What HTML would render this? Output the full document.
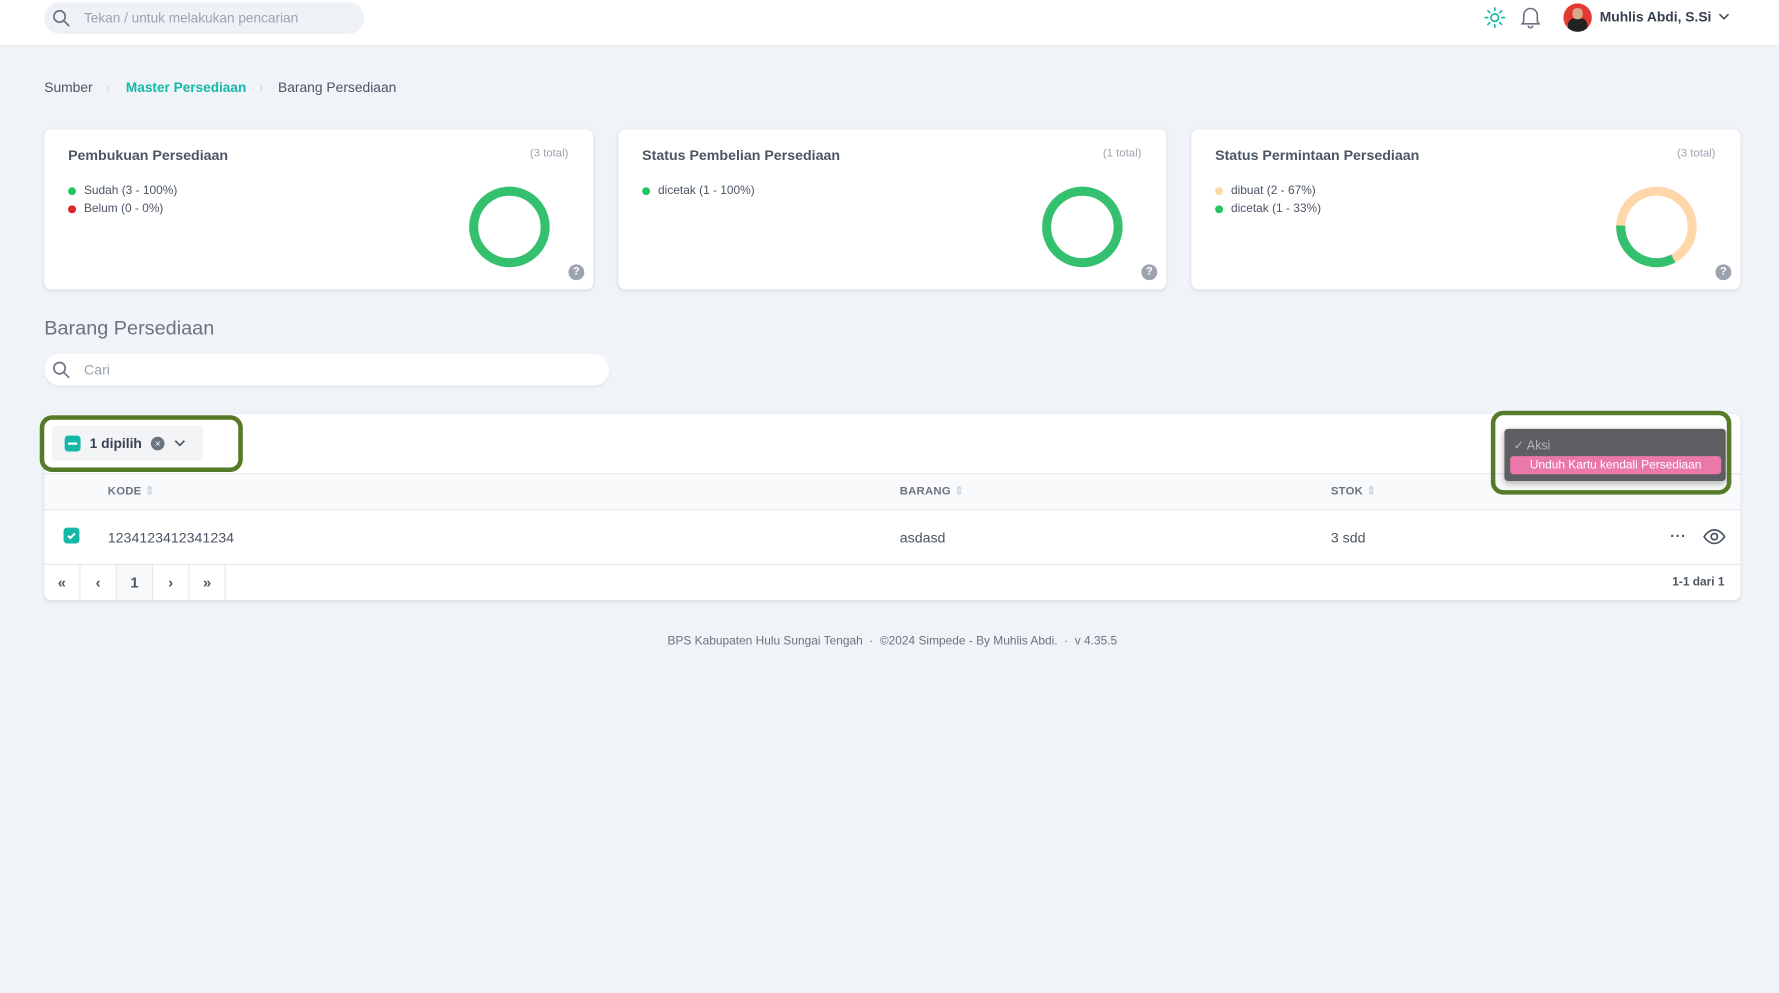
<!DOCTYPE html>
<html><head><meta charset="utf-8"><style>
*{box-sizing:border-box;margin:0;padding:0}
html,body{width:1779px;height:993px;overflow:hidden;background:#f0f3f8}
#w{width:1568px;height:875px;transform:scale(1.13457);transform-origin:0 0;position:relative;font-family:"Liberation Sans",sans-serif;color:#4b5563}
.abs{position:absolute}
.top{left:0;top:0;width:1568px;height:41px;background:#fff;border-bottom:1px solid #e5e7eb}
.card{background:#fff;border-radius:6px;box-shadow:0 1px 3px rgba(0,0,0,.12)}
.ct{font-size:12.5px;font-weight:bold;color:#4b5563}
.tot{font-size:10px;color:#9ca3af}
.lg{font-size:10.5px;color:#4b5563;display:flex;align-items:center}
.dot{width:7px;height:7px;border-radius:50%;display:inline-block;margin-right:7px}
.help{width:14px;height:14px;border-radius:50%;background:#9ca3af;color:#fff;font-size:10px;font-weight:bold;text-align:center;line-height:14px}
.th{font-size:10px;font-weight:bold;color:#6b7280;letter-spacing:.2px}
.pg{width:32px;height:31px;border-right:1px solid #e5e7eb;text-align:center;line-height:31px;font-size:13px;color:#4b5563;font-weight:bold}
</style></head><body><div id="w">
<div class="abs top"></div>
<div class="abs" style="left:39px;top:2px;width:282px;height:28px;border-radius:14px;background:#eef2f7"></div>
<svg class="abs" style="left:46px;top:8px" width="16" height="16" viewBox="0 0 16 16" fill="none" stroke="#6b7280" stroke-width="1.5"><circle cx="6.5" cy="6.5" r="5"/><path d="M10.5 10.5L15 15"/></svg>
<div class="abs" style="left:74px;top:9px;font-size:12px;color:#9ca3af">Tekan / untuk melakukan pencarian</div>
<svg class="abs" style="left:1308px;top:6px" width="19" height="19" viewBox="0 0 20 20" fill="none" stroke="#14b8a6" stroke-width="1.5" stroke-linecap="round"><circle cx="10" cy="10" r="3.5"/><path d="M10 1v2.5M10 16.5V19M1 10h2.5M16.5 10H19M3.6 3.6l1.8 1.8M14.6 14.6l1.8 1.8M3.6 16.4l1.8-1.8M14.6 5.4l1.8-1.8"/></svg>
<svg class="abs" style="left:1340px;top:5px" width="18" height="20" viewBox="0 0 18 20" fill="none" stroke="#6b7280" stroke-width="1.4"><path d="M3 14V8.5a6 6 0 0112 0V14l1.5 2h-15z"/><path d="M7 17.5a2 2 0 004 0"/></svg>
<div class="abs" style="left:1378px;top:3px;width:25px;height:25px;border-radius:50%;background:#e53935;overflow:hidden"><div style="position:absolute;left:4px;top:13px;width:17px;height:14px;background:#222;border-radius:6px 6px 0 0"></div><div style="position:absolute;left:8px;top:4px;width:9px;height:10px;background:#d7a98a;border-radius:4px"></div></div>
<div class="abs" style="left:1410px;top:8px;font-size:12.2px;font-weight:bold;color:#374151">Muhlis Abdi, S.Si</div>
<svg class="abs" style="left:1514px;top:10px" width="11" height="9" viewBox="0 0 11 9" fill="none" stroke="#4b5563" stroke-width="1.5"><path d="M1.5 2.5l4 4 4-4"/></svg>

<div class="abs" style="left:39px;top:70px;font-size:12.2px;color:#4b5563">Sumber</div>
<div class="abs" style="left:93px;top:69px;font-size:13px;color:#d1d5db">›</div>
<div class="abs" style="left:111px;top:70px;font-size:12px;color:#14b8a6;font-weight:bold">Master Persediaan</div>
<div class="abs" style="left:228px;top:69px;font-size:13px;color:#d1d5db">›</div>
<div class="abs" style="left:245px;top:70px;font-size:12.2px;color:#4b5563">Barang Persediaan</div>

<div class="abs card" style="left:39px;top:114px;width:484px;height:141px">
<div class="abs ct" style="left:21px;top:16px">Pembukuan Persediaan</div>
<div class="abs tot" style="right:22px;top:16px">(3 total)</div>
<div class="abs lg" style="left:21px;top:48px"><span class="dot" style="background:#22c55e"></span>Sudah (3 - 100%)</div>
<div class="abs lg" style="left:21px;top:64px"><span class="dot" style="background:#dc2626"></span>Belum (0 - 0%)</div>
<svg class="abs" style="left:374px;top:50px" width="72" height="72"><circle cx="36" cy="36" r="31.5" fill="none" stroke="#34c06e" stroke-width="8"/></svg>
<div class="abs help" style="left:462px;top:119px">?</div></div>

<div class="abs card" style="left:545px;top:114px;width:483px;height:141px">
<div class="abs ct" style="left:21px;top:16px">Status Pembelian Persediaan</div>
<div class="abs tot" style="right:22px;top:16px">(1 total)</div>
<div class="abs lg" style="left:21px;top:48px"><span class="dot" style="background:#22c55e"></span>dicetak (1 - 100%)</div>
<svg class="abs" style="left:373px;top:50px" width="72" height="72"><circle cx="36" cy="36" r="31.5" fill="none" stroke="#34c06e" stroke-width="8"/></svg>
<div class="abs help" style="left:461px;top:119px">?</div></div>

<div class="abs card" style="left:1050px;top:114px;width:484px;height:141px">
<div class="abs ct" style="left:21px;top:16px">Status Permintaan Persediaan</div>
<div class="abs tot" style="right:22px;top:16px">(3 total)</div>
<div class="abs lg" style="left:21px;top:48px"><span class="dot" style="background:#fed7aa"></span>dibuat (2 - 67%)</div>
<div class="abs lg" style="left:21px;top:64px"><span class="dot" style="background:#22c55e"></span>dicetak (1 - 33%)</div>
<svg class="abs" style="left:374px;top:50px" width="72" height="72"><circle cx="36" cy="36" r="31.5" fill="none" stroke="#fed7aa" stroke-width="8"/><circle cx="36" cy="36" r="31.5" fill="none" stroke="#34c06e" stroke-width="8" stroke-dasharray="66 200" transform="rotate(62 36 36)"/></svg>
<div class="abs help" style="left:462px;top:119px">?</div></div>

<div class="abs" style="left:39px;top:279px;font-size:17.5px;color:#6b7280">Barang Persediaan</div>
<div class="abs" style="left:39px;top:312px;width:498px;height:28px;border-radius:14px;background:#fff;box-shadow:0 1px 2px rgba(0,0,0,.08)"></div>
<svg class="abs" style="left:46px;top:318px" width="16" height="16" viewBox="0 0 16 16" fill="none" stroke="#6b7280" stroke-width="1.5"><circle cx="6.5" cy="6.5" r="5"/><path d="M10.5 10.5L15 15"/></svg>
<div class="abs" style="left:74px;top:319px;font-size:12.5px;color:#9ca3af">Cari</div>

<div class="abs card" style="left:39px;top:365px;width:1495px;height:164px;overflow:hidden">
<div class="abs" style="left:7px;top:10px;width:133px;height:31px;background:#f3f4f6;border-radius:3px"></div>
<div class="abs" style="left:18px;top:19px;width:14px;height:14px;background:#14b8a6;border-radius:3px"><div style="position:absolute;left:3px;top:6px;width:8px;height:2px;background:#fff"></div></div>
<div class="abs" style="left:40px;top:19px;font-size:12.2px;font-weight:bold;color:#374151">1 dipilih</div>
<div class="abs" style="left:94px;top:20px;width:12px;height:12px;border-radius:50%;background:#6b7280;color:#fff;font-size:9px;text-align:center;line-height:12px">×</div>
<svg class="abs" style="left:114px;top:21px" width="11" height="9" viewBox="0 0 11 9" fill="none" stroke="#4b5563" stroke-width="1.5"><path d="M1.5 2.5l4 4 4-4"/></svg>
<div class="abs" style="left:0;top:52px;width:1495px;height:33px;background:#f8fafc;border-top:1px solid #e5e7eb;border-bottom:1px solid #e5e7eb"></div>
<div class="abs th" style="left:56px;top:63px">KODE <span style="color:#cbd5e1">⇕</span></div>
<div class="abs th" style="left:754px;top:63px">BARANG <span style="color:#cbd5e1">⇕</span></div>
<div class="abs th" style="left:1134px;top:63px">STOK <span style="color:#cbd5e1">⇕</span></div>
<div class="abs" style="left:17px;top:100px;width:14px;height:14px;background:#14b8a6;border-radius:3px"><svg width="14" height="14" viewBox="0 0 14 14" fill="none" stroke="#fff" stroke-width="1.8"><path d="M4 7.2l2 2 4-4"/></svg></div>
<div class="abs" style="left:56px;top:102px;font-size:12.5px;color:#4b5563">1234123412341234</div>
<div class="abs" style="left:754px;top:102px;font-size:12.5px;color:#4b5563">asdasd</div>
<div class="abs" style="left:1134px;top:102px;font-size:12.5px;color:#4b5563">3 sdd</div>
<div class="abs" style="left:1433px;top:100px;font-size:13px;font-weight:bold;color:#4b5563;letter-spacing:0.5px">···</div>
<svg class="abs" style="left:1462px;top:100px" width="20" height="16" viewBox="0 0 20 16" fill="none" stroke="#4b5563" stroke-width="1.5"><path d="M1 8s3.5-6 9-6 9 6 9 6-3.5 6-9 6-9-6-9-6z"/><circle cx="10" cy="8" r="2.8"/></svg>
<div class="abs" style="left:0;top:132px;width:1495px;height:32px;border-top:1px solid #e5e7eb;display:flex">
<div class="pg">«</div><div class="pg">‹</div><div class="pg" style="background:#f8fafc">1</div><div class="pg">›</div><div class="pg">»</div></div>
<div class="abs" style="right:14px;top:142px;font-size:10.5px;font-weight:bold;color:#4b5563">1-1 dari 1</div>
</div>

<div class="abs" style="left:1326px;top:378px;width:195px;height:46px;background:#5f5f63;border-radius:3px;box-shadow:0 2px 6px rgba(0,0,0,.3)"></div>
<div class="abs" style="left:1334px;top:386px;font-size:11px;color:#b3b3b8">✓ Aksi</div>
<div class="abs" style="left:1331px;top:402px;width:186px;height:16px;background:#ea78a9;border-radius:3px;color:#fff;font-size:10.5px;text-align:center;line-height:16px">Unduh Kartu kendali Persediaan</div>
<div class="abs" style="left:35px;top:366px;width:179px;height:50px;border:4px solid #567a27;border-radius:11px"></div>
<div class="abs" style="left:1314px;top:362px;width:212px;height:74px;border:4px solid #567a27;border-radius:11px"></div>

<div class="abs" style="left:0;top:559px;width:1573px;text-align:center;font-size:10.5px;color:#6b7280">BPS Kabupaten Hulu Sungai Tengah &nbsp;·&nbsp; ©2024 Simpede - By Muhlis Abdi. &nbsp;·&nbsp; v 4.35.5</div>
</div></body></html>
